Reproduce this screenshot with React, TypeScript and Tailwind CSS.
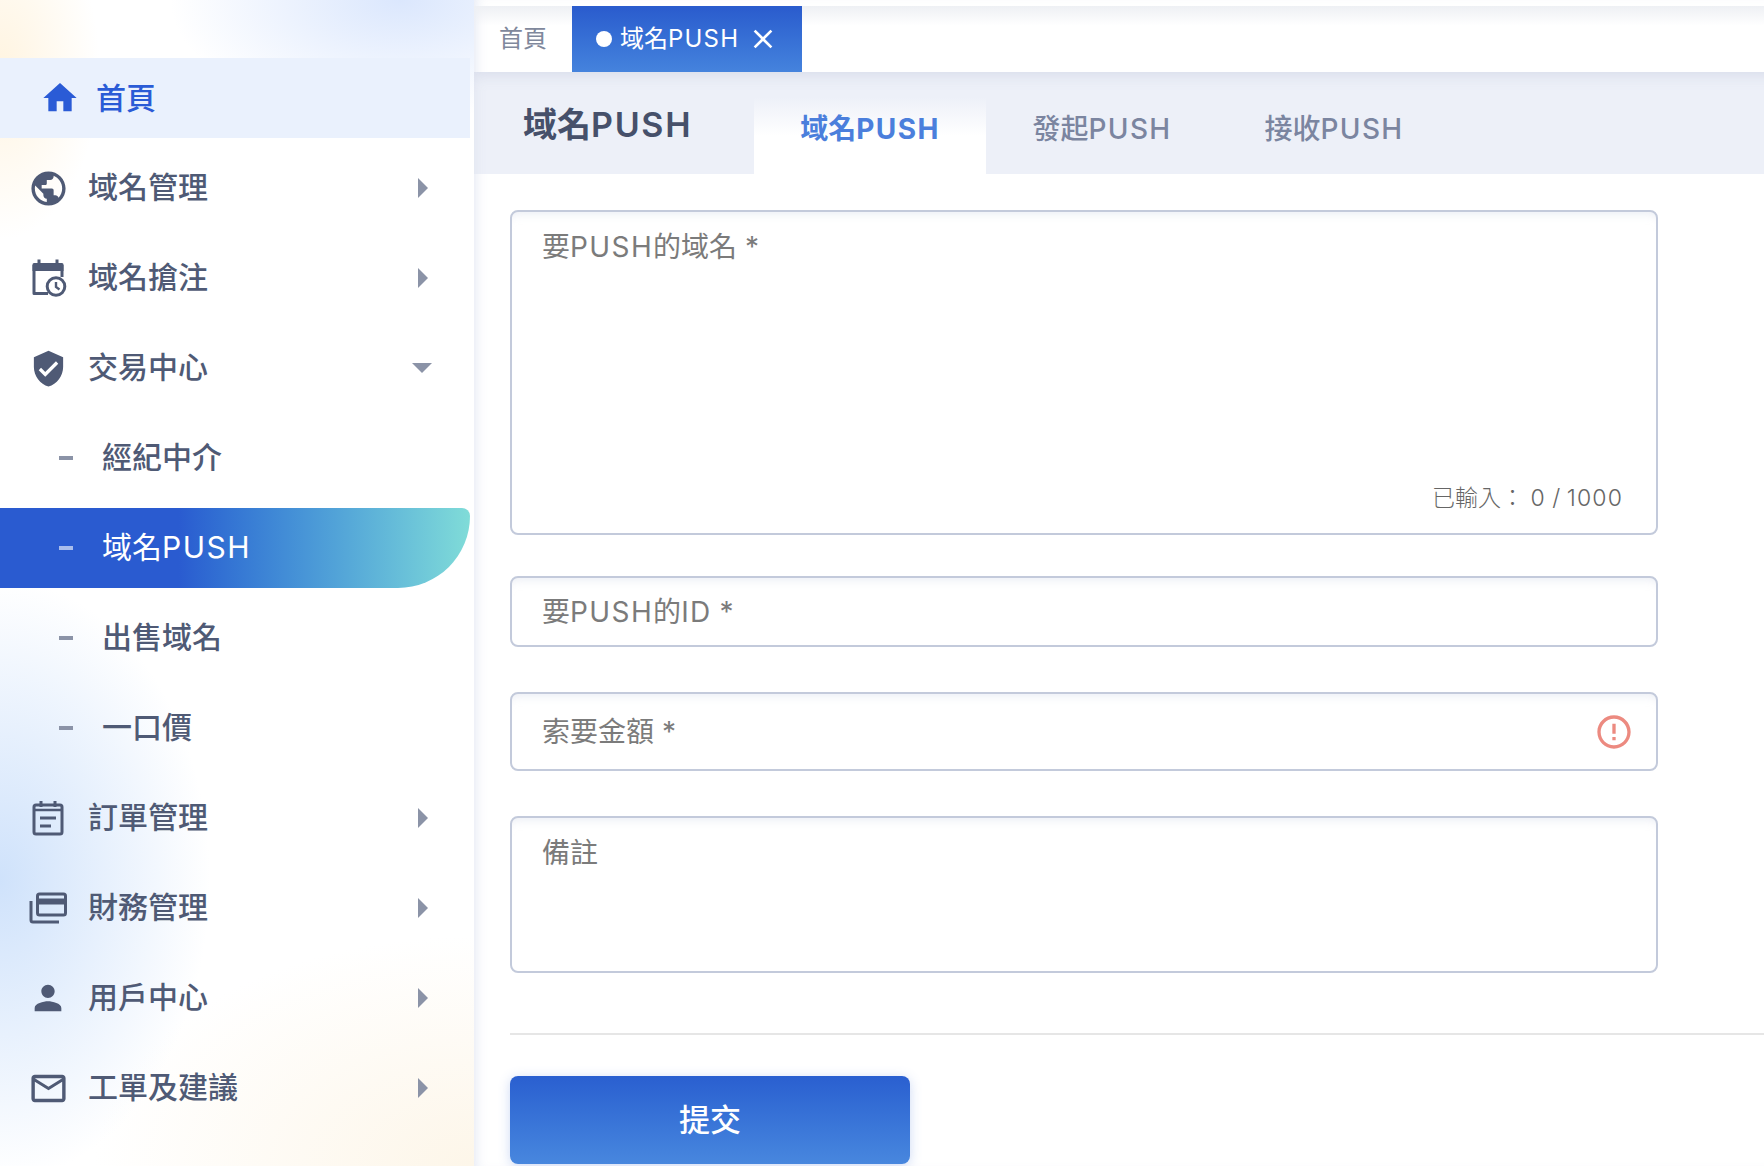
import React from "react";
import { MdHome, MdPublic, MdVerifiedUser, MdPerson, MdMailOutline, MdErrorOutline, MdClose } from "react-icons/md";

function Txt({ s }: { s: string }) {
  const parts = s.split(/([A-Za-z0-9]+)/);
  return (
    <>
      {parts.map((p, i) =>
        /^[A-Za-z0-9]+$/.test(p) ? (
          <span key={i} className="tracking-[0.05em]">
            {p}
          </span>
        ) : (
          <React.Fragment key={i}>{p}</React.Fragment>
        ),
      )}
    </>
  );
}

function CalendarClock() {
  return (
    <svg width="36" height="40" viewBox="0 0 36 40" fill="none" className="ml-[2px]">
      <path d="M3 5h28a1.5 1.5 0 0 1 1.5 1.5V13H1.5V6.500A1.500 1.500 0 0 1 3 5Z" fill="currentColor" />
      <path d="M8 1.500v5M26 1.500v5" stroke="currentColor" strokeWidth="3" />
      <path d="M3 7v28.500h14M31 7v12" stroke="currentColor" strokeWidth="3" strokeLinejoin="round" />
      <circle cx="25" cy="28.500" r="8.800" fill="#fff" stroke="currentColor" strokeWidth="3" />
      <path d="M25 24v5l3.500 2.500" stroke="currentColor" strokeWidth="2.400" />
    </svg>
  );
}

function OrderIcon() {
  return (
    <svg width="32" height="36" viewBox="0 0 32 36" fill="none" stroke="currentColor">
      <rect x="2" y="5" width="28" height="29" rx="2" strokeWidth="3" />
      <path d="M9 1v6M23 1v6" strokeWidth="3" />
      <path d="M2 10h28" strokeWidth="2.500" />
      <path d="M8 18h16M8 26h11" strokeWidth="3" />
    </svg>
  );
}

function FinanceIcon() {
  return (
    <svg width="38" height="32" viewBox="0 0 38 32" fill="none" stroke="currentColor">
      <rect x="8.500" y="2" width="28" height="21" rx="2" strokeWidth="3" />
      <path d="M8.500 9.500h28" strokeWidth="6" />
      <path d="M2 9v19a2 2 0 0 0 2 2h26" strokeWidth="3" />
    </svg>
  );
}

function ArrowRight() {
  return <span className="mr-[42px] ml-auto h-0 w-0 border-y-[10px] border-l-[10px] border-y-transparent border-l-[#8b93a7]" />;
}

function ArrowDown() {
  return <span className="mr-[38px] ml-auto h-0 w-0 border-x-[10px] border-t-[10px] border-x-transparent border-t-[#8b93a7]" />;
}

function MenuRow({ icon, label, open }: { icon: React.ReactNode; label: string; open?: boolean }) {
  return (
    <div className="mb-[10px] flex h-[80px] w-[470px] items-center pl-6 text-[#4f5a75]">
      <span className="flex w-12 justify-center">{icon}</span>
      <span className="ml-[16px] pb-[2px] font-medium">{label}</span>
      {open ? <ArrowDown /> : <ArrowRight />}
    </div>
  );
}

function SubRow({ label, active }: { label: string; active?: boolean }) {
  return (
    <div
      className={
        active
          ? "mb-[10px] flex h-[80px] w-[470px] items-center rounded-tr-[8px] rounded-br-[72px] bg-gradient-to-r from-[#2a5bd0] from-[38%] to-[#80dcd8] pl-[59px] text-white"
          : "mb-[10px] flex h-[80px] w-[470px] items-center pl-[59px] font-medium text-[#4f5a75]"
      }
    >
      <span className={active ? "h-[4px] w-[14px] bg-[#a9bdec]" : "h-[4px] w-[14px] bg-[#8b93a7]"} />
      <span className="ml-[29px] pb-[2px]">
        <Txt s={label} />
      </span>
    </div>
  );
}

function Field({ label, className, children }: { label: string; className: string; children?: React.ReactNode }) {
  return (
    <div
      className={
        "flex w-[1148px] rounded-[8px] border-2 border-[#c3cadb] bg-white pl-[30px] text-[28px] text-[#7b7b7b] shadow-[inset_0_10px_10px_-8px_rgba(225,230,240,0.7)] " +
        className
      }
    >
      <span className="leading-[36px]">
        <Txt s={label} />
      </span>
      {children}
    </div>
  );
}

export default function App() {
  return (
    <div className="flex h-[1166px] w-[1764px] overflow-hidden bg-white font-['Inter','Noto_Sans_CJK_TC',sans-serif]">
      <aside className="h-full w-[474px] shrink-0 bg-[radial-gradient(ellipse_100px_170px_at_0px_70px,#fff4e0_0%,transparent_100%),radial-gradient(ellipse_230px_120px_at_400px_0px,#dbe7fd_0%,transparent_100%),radial-gradient(ellipse_210px_300px_at_0px_880px,#cfe2fb_0%,transparent_100%),radial-gradient(ellipse_380px_230px_at_474px_1166px,#fdf6e9_0%,transparent_100%)] pt-[58px] text-[30px]">
        <div className="mb-[10px] flex h-[80px] w-[470px] items-center bg-[#eaf1fd] pl-[36px] font-medium text-[#2a5bd6]">
          <span className="flex w-12 justify-center">
            <MdHome size={40} />
          </span>
          <span className="ml-[12px]">首頁</span>
        </div>
        <MenuRow icon={<MdPublic size={41} />} label="域名管理" />
        <MenuRow icon={<CalendarClock />} label="域名搶注" />
        <MenuRow icon={<MdVerifiedUser size={39} />} label="交易中心" open />
        <SubRow label="經紀中介" />
        <SubRow label="域名PUSH" active />
        <SubRow label="出售域名" />
        <SubRow label="一口價" />
        <MenuRow icon={<OrderIcon />} label="訂單管理" />
        <MenuRow icon={<FinanceIcon />} label="財務管理" />
        <MenuRow icon={<MdPerson size={40} />} label="用戶中心" />
        <MenuRow icon={<MdMailOutline size={41} />} label="工單及建議" />
      </aside>

      <main className="flex min-w-0 flex-1 flex-col shadow-[inset_10px_0_12px_-8px_rgba(225,230,242,0.9)]">
        <div className="mt-[6px] flex h-[66px] shrink-0 bg-gradient-to-b from-[#eef0f4] from-0% to-transparent to-[30%] text-[24px]">
          <div className="flex w-[98px] items-center pl-[25px] text-[#7f889c]">首頁</div>
          <div className="flex w-[230px] items-center bg-gradient-to-b from-[#2a5bcd] to-[#4583dd] pl-[24px] text-white">
            <span className="h-4 w-4 rounded-full bg-white" />
            <span className="ml-[8px]">
              <Txt s="域名PUSH" />
            </span>
            <MdClose size={32} className="ml-[8px]" />
          </div>
        </div>

        <div className="flex h-[102px] shrink-0 bg-[#edf0f8] shadow-[inset_8px_14px_14px_-10px_rgba(215,220,234,0.9)]">
          <div className="flex w-[280px] items-center pl-[49px] text-[34px] font-semibold text-[#46506a]">
            <span className="pt-[2px]">
              <Txt s="域名PUSH" />
            </span>
          </div>
          <div className="mt-[25px] flex h-[77px] w-[232px] items-center justify-center bg-gradient-to-b from-[#edf0f8] to-white to-[50%] pb-[14px] text-[28px] font-bold text-[#4b7fdc]">
            <Txt s="域名PUSH" />
          </div>
          <div className="mt-[25px] flex h-[77px] w-[232px] items-center justify-center pb-[14px] text-[28px] font-medium text-[#7b85a0]">
            <Txt s="發起PUSH" />
          </div>
          <div className="mt-[25px] flex h-[77px] w-[232px] items-center justify-center pb-[14px] text-[28px] font-medium text-[#7b85a0]">
            <Txt s="接收PUSH" />
          </div>
        </div>

        <form className="flex flex-1 flex-col pt-[36px] pl-[36px]">
          <Field label="要PUSH的域名 *" className="relative h-[325px] pt-[17px]">
            <span className="absolute right-[33px] bottom-[20px] text-[23px] leading-[30px] font-light text-[#666666]">
              <Txt s="已輸入： 0 / 1000" />
            </span>
          </Field>
          <Field label="要PUSH的ID *" className="mt-[41px] h-[71px] items-center" />
          <Field label="索要金額 *" className="mt-[45px] h-[79px] items-center pr-[22px]">
            <MdErrorOutline size={40} className="ml-auto text-[#ec8a80]" />
          </Field>
          <Field label="備註" className="mt-[45px] h-[157px] pt-[17px]" />
          <div className="mt-[60px] h-[2px] w-full bg-[#e6e6e6]" />
          <button
            type="button"
            className="mt-[41px] flex h-[88px] w-[400px] items-center justify-center rounded-[8px] bg-gradient-to-b from-[#2a5fd0] to-[#4887de] text-[31px] font-medium text-white shadow-[0_2px_12px_rgba(90,130,220,0.3)]"
          >
            提交
          </button>
        </form>
      </main>
    </div>
  );
}
